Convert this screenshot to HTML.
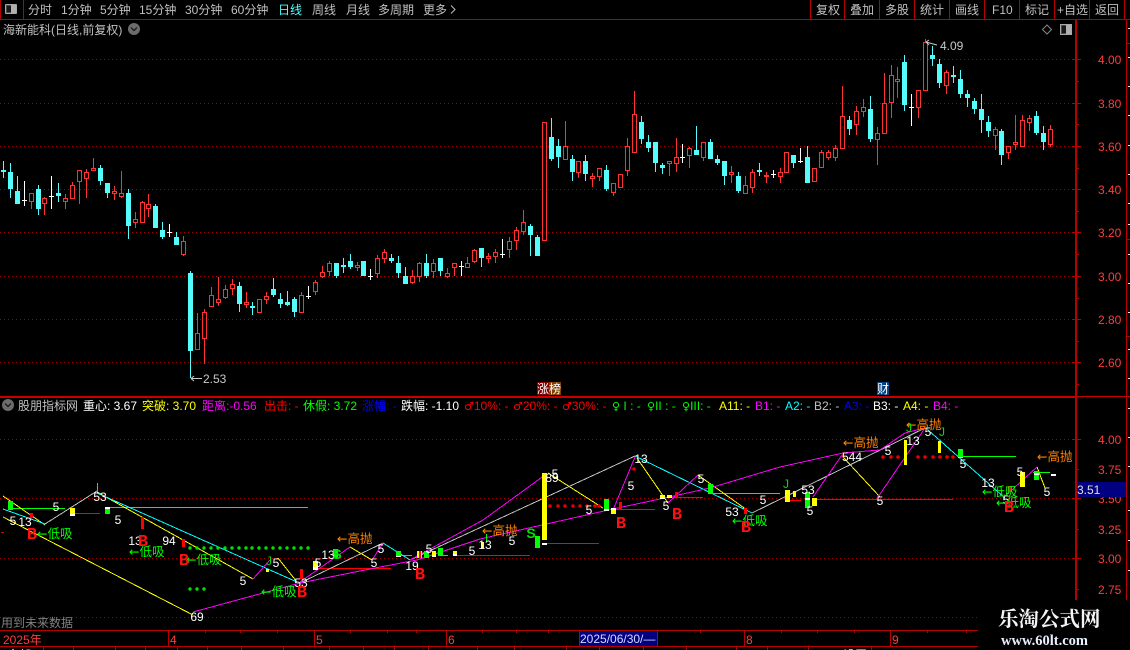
<!DOCTYPE html>
<html lang="zh"><head><meta charset="utf-8"><title>K线</title>
<style>
html,body{margin:0;padding:0;background:#000;width:1130px;height:650px;overflow:hidden}
svg{display:block;position:absolute;left:0;top:0}
text{font-family:"Liberation Sans","WenQuanYi Zen Hei","Noto Sans CJK SC",sans-serif;font-size:12px;white-space:pre}
tspan.s{font-family:"DejaVu Sans",sans-serif;font-size:11px}
tspan.r{font-family:"DejaVu Sans",sans-serif;font-size:12.5px}
.n{fill:#fff;text-anchor:middle}
.o{fill:#ff8000;font-size:12.5px}
.g{fill:#00ff00;font-size:12.5px}
.b{fill:#ff1010;font-family:"Liberation Mono",monospace;font-size:17px;font-weight:bold;text-anchor:middle}
.m{fill:#c8c8c8;text-anchor:middle}
.a{fill:#ff3c3c}
</style></head><body>
<svg width="1130" height="650" viewBox="0 0 1130 650" xmlns="http://www.w3.org/2000/svg">
<rect width="1130" height="650" fill="#000"/>

<!-- grid -->
<g shape-rendering="crispEdges" stroke="#a80000" stroke-width="1" stroke-dasharray="1 3" fill="none">
<path d="M0 59.5H1075M0 103.5H1075M0 146.5H1075M0 189.5H1075M0 232.5H1075M0 276.5H1075M0 319.5H1075M0 362.5H1075M0 439.5H1075M0 498.5H1075M0 558.5H1075M0 617.5H978"/>
</g>

<!-- frame -->
<g shape-rendering="crispEdges" stroke="#b80000" fill="none">
<path d="M0 19.5H1130M23.5 0V19M810.5 0V19M844.5 0V19M879.5 0V19M914.5 0V19M949.5 0V19M984.5 0V19M1019.5 0V19M1054.5 0V19M1089.5 0V19M1124.5 0V19"/>
<path d="M0.5 0V19"/>
<path d="M0 396.5H1130M0 397.5H1075" stroke="#c80000"/>
<path d="M1075.5 20V600M1076.5 20V600M1126.5 20V600"/>
<path d="M1126 239.5H1130M1126 336.5H1130M1126 43.5H1130"/>
<path d="M1073 59.5H1081M1073 103.5H1081M1073 146.5H1081M1073 189.5H1081M1073 232.5H1081M1073 276.5H1081M1073 319.5H1081M1073 362.5H1081M1076 81.5H1079M1076 124.5H1079M1076 168.5H1079M1076 211.5H1079M1076 254.5H1079M1076 298.5H1079M1076 341.5H1079M1076 384.5H1079"/>
<path d="M1073 439.5H1081M1073 498.5H1081M1073 558.5H1081M1076 469.5H1079M1076 529.5H1079M1076 589.5H1079"/>
<path d="M0 630.5H978M0 646.5H978M168.5 630V646M314.5 630V646M446.5 630V646M579.5 630V646M657.5 630V646M744.5 630V646M890.5 630V646"/>
<path d="M205.5 630V633M240.5 630V633M277.5 630V633M350.5 630V633M387.5 630V633M416.5 630V633M482.5 630V633M516.5 630V633M548.5 630V633M700.5 630V633M781.5 630V633M817.5 630V633M854.5 630V633M927.5 630V633M966.5 630V633"/>
<path d="M43.5 646V650M73.5 646V650M115.5 646V650M145.5 646V650M177.5 646V650M207.5 646V650M241.5 646V650M283.5 646V650M329.5 646V650M363.5 646V650M394.5 646V650M428.5 646V650M477.5 646V650M514.5 646V650M566.5 646V650M599.5 646V650M643.5 646V650M686.5 646V650M736.5 646V650M767.5 646V650M808.5 646V650M871.5 646V650"/>
</g>
<path shape-rendering="crispEdges" stroke="#e8e8e8" fill="none" d="M1128 28.5H1130M1128 57.5H1130M1128 86.5H1130M1128 115.5H1130M1128 145.5H1130M1128 174.5H1130M1128 203.5H1130M1128 224.5H1130M1128 254.5H1130M1128 283.5H1130M1128 312.5H1130M1128 349.5H1130M1128 378.5H1130M1128 408.5H1130M1128 437.5H1130M1128 466.5H1130M1128 510.5H1130M1128 540.5H1130M1128 570.5H1130"/>

<!-- toolbar icon -->
<g shape-rendering="crispEdges">
<rect x="5.5" y="4.5" width="11" height="9" rx="1" stroke="#a8a8a8" fill="#4a4a4a"/>
<rect x="11" y="5" width="5" height="8" fill="#b0b0b0"/>
<rect x="7" y="6" width="4" height="6" fill="#181818"/>
</g>
<!-- toolbar text -->
<g fill="#c0c0c0">
<text x="28" y="14">分时</text>
<text x="61" y="14">1分钟</text>
<text x="100" y="14">5分钟</text>
<text x="139" y="14">15分钟</text>
<text x="185" y="14">30分钟</text>
<text x="231" y="14">60分钟</text>
<text x="278" y="14" fill="#54fcfc">日线</text>
<text x="312" y="14">周线</text>
<text x="346" y="14">月线</text>
<text x="378" y="14">多周期</text>
<text x="423" y="14">更多</text>
<path d="M451 5.5l4 4-4 4" fill="none" stroke="#c0c0c0"/>
<text x="816" y="14">复权</text>
<text x="850" y="14">叠加</text>
<text x="885" y="14">多股</text>
<text x="920" y="14">统计</text>
<text x="955" y="14">画线</text>
<text x="992" y="14">F10</text>
<text x="1025" y="14">标记</text>
<text x="1057" y="14">+自选</text>
<text x="1095" y="14">返回</text>
<text x="3" y="34">海新能科(日线,前复权)</text>
</g>
<circle cx="134" cy="29" r="6" fill="#6c6c6c"/>
<path d="M131 27.5l3 3 3-3" fill="none" stroke="#111" stroke-width="1.2"/>
<path d="M1047 25l4.500 4.500-4.500 4.500-4.500-4.500z" fill="none" stroke="#888"/>
<g shape-rendering="crispEdges"><rect x="1060.500" y="24.500" width="11" height="10" fill="#4a4a4a" stroke="#a8a8a8"/><rect x="1066" y="25" width="5" height="9" fill="#b0b0b0"/><rect x="1062" y="26" width="4" height="7" fill="#181818"/></g>

<!-- axis labels -->
<g class="a">
<text class="a" x="1098" y="64">4.00</text>
<text class="a" x="1098" y="108">3.80</text>
<text class="a" x="1098" y="151">3.60</text>
<text class="a" x="1098" y="194">3.40</text>
<text class="a" x="1098" y="237">3.20</text>
<text class="a" x="1098" y="281">3.00</text>
<text class="a" x="1098" y="324">2.80</text>
<text class="a" x="1098" y="367">2.60</text>
<text class="a" x="1098" y="444">4.00</text>
<text class="a" x="1098" y="474">3.75</text>
<text class="a" x="1098" y="503">3.50</text>
<text class="a" x="1098" y="534">3.25</text>
<text class="a" x="1098" y="563">3.00</text>
<text class="a" x="1098" y="594">2.75</text>
</g>

<!-- candles -->
<g shape-rendering="crispEdges" fill="none">
<path stroke="#ff3232" d="M31.5 193V209M44.5 197V215M65.5 194V209M72.5 182V199M79.5 170V204M86.5 169V198M93.5 158V171M114.5 186V200M121.5 171V198M135.5 212V228M142.5 201V223M148.5 194V217M183.5 236V256M197.5 313V350M204.5 309V364M211.5 287V307M218.5 277V306M225.5 285V299M232.5 279V295M246.5 292V308M259.5 299V313M266.5 292V304M301.5 292V313M315.5 280V295M322.5 266V278M329.5 261V276M357.5 262V271M377.5 255V278M384.5 249V263M412.5 270V284M419.5 262V282M433.5 259V278M447.5 268V278M454.5 263V276M467.5 257V268M474.5 249V263M488.5 253V263M495.5 249V263M509.5 237V258M516.5 227V250M523.5 210V235M544.5 122V241M565.5 121V160M578.5 161V178M592.5 173V187M599.5 168V181M613.5 183V196M620.5 174V188M627.5 138V176M634.5 91V153M669.5 161V176M676.5 138V172M689.5 147V168M703.5 142V161M731.5 166V183M745.5 176V194M752.5 169V193M766.5 172V183M780.5 168V183M786.5 152V173M814.5 168V182M821.5 150V168M828.5 150V160M835.5 145V161M842.5 86V149M856.5 106V135M863.5 99V117M877.5 127V165M884.5 73V134M891.5 65V118M897.5 67V98M918.5 90V118M925.5 39V91M946.5 70V94M995.5 127V150M1008.500 146V159M1015.500 115V150M1022.500 115V147M1029.500 115V131M1050.500 125V147"/>
<path stroke="#ff3232" fill="#000" d="M29.500 193.500h4v8h-4zM42.500 198.500h4v5h-4zM63.500 198.500h4v3h-4zM70.500 185.500h4v13h-4zM77.500 170.500h4v11h-4zM84.500 172.500h4v6h-4zM91.500 168.500h4v2h-4zM112.500 191.500h4v2h-4zM119.500 193.500h4v3h-4zM133.500 219.500h4v3h-4zM140.500 202.500h4v20h-4zM146.500 204.500h4v4h-4zM181.500 241.500h4v13h-4zM195.500 333.500h4v16h-4zM202.500 312.500h4v26h-4zM209.500 295.500h4v11h-4zM216.500 299.500h4v3h-4zM223.500 289.500h4v8h-4zM230.500 284.500h4v4h-4zM244.500 302.500h4v2h-4zM257.500 299.500h4v13h-4zM264.500 296.500h4v3h-4zM299.500 295.500h4v17h-4zM313.500 282.500h4v9h-4zM320.500 272.500h4v4h-4zM327.500 263.500h4v8h-4zM355.500 265.500h4v2h-4zM375.500 258.500h4v15h-4zM382.500 252.500h4v6h-4zM410.500 276.500h4v6h-4zM417.500 263.500h4v13h-4zM431.500 263.500h4v8h-4zM445.500 273.500h4v3h-4zM452.500 263.500h4v4h-4zM465.500 263.500h4v4h-4zM472.500 250.500h4v11h-4zM486.500 256.500h4v2h-4zM493.500 252.500h4v4h-4zM507.500 241.500h4v8h-4zM514.500 230.500h4v10h-4zM521.500 222.500h4v9h-4zM542.500 122.500h4v118h-4zM563.500 146.500h4v13h-4zM576.500 161.500h4v11h-4zM590.500 176.500h4v2h-4zM597.500 168.500h4v8h-4zM611.500 183.500h4v9h-4zM618.500 174.500h4v13h-4zM625.500 146.500h4v24h-4zM632.500 114.500h4v38h-4zM667.500 161.500h4v2h-4zM674.500 157.500h4v6h-4zM687.500 148.500h4v7h-4zM701.500 142.500h4v15h-4zM729.500 172.500h4v2h-4zM743.500 185.500h4v8h-4zM750.500 172.500h4v15h-4zM764.500 175.500h4v1h-4zM778.500 172.500h4v4h-4zM784.500 152.500h4v20h-4zM812.500 168.500h4v13h-4zM819.500 152.500h4v15h-4zM826.500 152.500h4v5h-4zM833.500 148.500h4v9h-4zM840.500 116.500h4v32h-4zM854.500 111.500h4v13h-4zM861.500 107.500h4v4h-4zM875.500 133.500h4v6h-4zM882.500 103.500h4v30h-4zM889.500 75.500h4v27h-4zM895.500 79.500h4v2h-4zM916.500 90.500h4v17h-4zM923.500 42.500h4v48h-4zM944.500 72.500h4v13h-4zM993.500 129.500h4v6h-4zM1006.500 146.500h4v6h-4zM1013.500 142.500h4v2h-4zM1020.500 120.500h4v26h-4zM1027.500 118.500h4v4h-4zM1048.500 129.500h4v15h-4z"/>
<path stroke="#54fcfc" d="M3.500 161V178M10.500 163V198M17.500 176V204M38.500 185V215M58.500 183V202M100.500 165V185M107.500 183V198M128.500 189V239M155.500 204V228M162.500 222V239M176.500 232V245M190.500 271V378M239.500 282V312M252.500 302V315M273.500 278V297M280.500 293V308M287.500 291V306M294.500 297V317M336.500 263V278M343.500 258V273M350.500 254V269M363.500 261V276M391.500 254V263M398.500 256V278M405.500 267V284M426.500 254V278M440.500 258V276M481.500 248V267M530.500 224V256M537.500 235V256M551.500 118V161M558.500 139V168M572.500 155V181M585.500 155V181M606.500 165V191M641.500 116V144M648.500 135V152M655.500 142V172M662.500 163V174M696.500 126V155M710.500 139V159M717.500 155V165M724.500 161V185M738.500 172V193M759.500 163V176M793.500 155V168M807.500 146V183M849.500 116V135M870.500 96V142M904.500 55V111M932.500 46V66M939.500 59V88M953.500 66V83M960.500 70V98M967.500 90V107M974.500 98V114M981.500 94V133M988.500 116V137M1001.500 129V165M1036.500 111V135M1043.500 126V150"/>
<path stroke="#54fcfc" stroke-width="5" d="M3.500 170V172M10.500 172V189M17.500 191V204M38.500 189V209M58.500 193V196M100.500 168V181M107.500 183V193M128.500 193V226M155.500 206V228M162.500 230V237M176.500 237V245M190.500 273V351M239.500 286V304M252.500 306V308M273.500 289V295M280.500 299V304M287.500 302V305M294.500 299V312M336.500 263V276M343.500 265V267M350.500 261V267M363.500 261V276M391.500 258V261M398.500 263V273M405.500 276V284M426.500 263V276M440.500 258V271M481.500 248V258M530.500 226V235M537.500 237V256M551.500 137V159M558.500 146V157M572.500 159V172M585.500 161V174M606.500 170V189M641.500 122V139M648.500 142V148M655.500 142V163M662.500 165V168M696.500 150V155M710.500 142V159M717.500 159V163M724.500 161V176M738.500 176V191M759.500 170V172M793.500 155V163M807.500 157V183M849.500 120V129M870.500 109V139M904.500 62V105M932.500 55V59M939.500 64V83M953.500 75V77M960.500 79V94M967.500 94V98M974.500 101V109M981.500 109V120M988.500 122V131M1001.500 131V155M1036.500 116V133M1043.500 133V142"/>
<path stroke="#fff" d="M24.500 181V206M22 200.500H27M51.500 176V209M49 196.500H54M169.500 224V237M167 232.500H172M308.500 286V299M306 296.500H311M370.500 269V280M368 276.500H373M461.500 261V276M459 266.500H464M502.500 239V258M500 254.500H505M682.500 144V163M680 157.500H685M773.500 170V178M771 174.500H776M800.500 148V163M798 161.500H803M911.500 94V126M909 107.500H914"/>
</g>
<!-- price notes -->
<path d="M926 42l11 3M926 42l3-2M926 42l3 3" stroke="#c8c8c8" fill="none"/>
<text x="940" y="50" fill="#c8c8c8">4.09</text>
<path d="M191 378.500H202M191 378.500l3-2.500M191 378.500l3 2.500" stroke="#c8c8c8" fill="none"/>
<text x="203" y="383" fill="#c8c8c8">2.53</text>
<g shape-rendering="crispEdges"><rect x="537" y="382" width="12" height="13" fill="#800000"/><rect x="549" y="382" width="12" height="13" fill="#804000"/><rect x="877" y="382" width="12" height="13" fill="#004080"/></g>
<text x="537" y="393" fill="#fff">涨榜</text>
<text x="877" y="393" fill="#fff">财</text>

<!-- indicator legend -->
<circle cx="8" cy="405" r="6" fill="#6c6c6c"/>
<path d="M5 403.500l3 3 3-3" fill="none" stroke="#111" stroke-width="1.2"/>
<g>
<text x="18" y="410" fill="#c0c0c0">股朋指标网</text>
<text x="83" y="410" fill="#fff">重心: 3.67</text>
<text x="142" y="410" fill="#ffff00">突破: 3.70</text>
<text x="202" y="410" fill="#ff00ff">距离:-0.56</text>
<text x="264" y="410" fill="#ff0000">出击: -</text>
<text x="303" y="410" fill="#00ff00">休假: 3.72</text>
<text x="362" y="410" fill="#0000ff">涨幅: -</text>
<text x="401" y="410" fill="#fff">跌幅: -1.10</text>
<text x="464" y="410" fill="#ff0000"><tspan class="s">♂</tspan>10%: -</text>
<text x="513" y="410" fill="#ff0000"><tspan class="s">♂</tspan>20%: -</text>
<text x="562" y="410" fill="#ff0000"><tspan class="s">♂</tspan>30%: -</text>
<text x="612" y="410" fill="#00ff00"><tspan class="s">♀</tspan> I : -</text>
<text x="647" y="410" fill="#00ff00"><tspan class="s">♀</tspan>II : -</text>
<text x="682" y="410" fill="#00ff00"><tspan class="s">♀</tspan>III: -</text>
<text x="719" y="410" fill="#ffff00">A11: -</text>
<text x="755" y="410" fill="#ff00ff">B1: -</text>
<text x="785" y="410" fill="#00ffff">A2: -</text>
<text x="814" y="410" fill="#c0c0c0">B2: -</text>
<text x="844" y="410" fill="#0000ff">A3: -</text>
<text x="873" y="410" fill="#fff">B3: -</text>
<text x="903" y="410" fill="#ffff00">A4: -</text>
<text x="933" y="410" fill="#ff00ff">B4: -</text>
</g>

<!-- horizontal levels -->
<g shape-rendering="crispEdges" fill="none">
<path stroke="#00ff00" d="M8 508.500H65M110 507.500H308M713 493.500H780M958 456.500H1016M1033 472.500H1050M400 555.500H412M442 555.500H448"/>
<path stroke="#ff0000" d="M75 513.500H100M317 568.500H391M453 555.500H530M543 543.500H599M613 509.500H655M665 497.500H703M790 500.500H801M813 499.500H953"/>
</g>

<!-- zigzag lines -->
<g fill="none" stroke-width="1" shape-rendering="crispEdges">
<path stroke="#ffff00" d="M3 496L45 525M3 517L193 615M97 492L253 579M278 558L297 582M350 547L372 560M548 473L603 508M637 458L668 503M698 475L747 510M843 457L880 497M1037 467L1045 488"/>
<path stroke="#00ffff" d="M3 509L45 524M97 493L297 582M383 543L410 560M635 456L752 513M928 430L1005 498"/>
<path stroke="#c0c0c0" d="M45 524L97 491M300 583L383 543M410 560L635 456M752 513L925 428"/>
<path stroke="#ff00ff" d="M193 612L300 583L375 568L417 560L480 539L613 509L660 499L710 488L780 467L843 453L880 450L905 433L925 428M253 579L270 560M300 582L350 547M372 560L383 543M410 560L483 520L545 475M613 510L635 457M668 503L698 475M813 497L842 455M878 497L925 428M1003 498L1037 467"/>
</g>

<!-- bars -->
<g shape-rendering="crispEdges">
<path fill="#00ff00" d="M8 501h5v9h-5zM105 509h5v5h-5zM396 551h5v5h-5zM424 551h5v7h-5zM438 548h5v8h-5zM535 536h5v12h-5zM604 499h5v10h-5zM708 484h5v10h-5zM805 492h5v16h-5zM958 449h5v8h-5zM1034 475h5v5h-5zM1034 471h5v2h-5zM333 549h5v9h-5z"/>
<path fill="#ffff00" d="M70 508h5v6h-5zM313 561h5v6h-5zM417 551h5v7h-5zM432 551h4v4h-4zM453 551h4v3h-4zM481 542h3v6h-3zM542 473h5v67h-5zM611 510h5v4h-5zM660 495h5v3h-5zM667 495h5v2h-5zM785 490h5v12h-5zM793 491h3v6h-3zM812 498h5v8h-5zM904 440h3v25h-3zM938 441h3v12h-3zM1020 472h5v15h-5zM266 569h3v3h-3z"/>
<path fill="#ff0000" d="M30 513h3v5h-3zM141 517h3v12h-3zM182 539h3v8h-3zM300 569h3v10h-3zM419 551h2v7h-2zM619 502h3v8h-3zM675 492h3v5h-3zM744 508h3v6h-3zM1008 486h3v6h-3z"/>
<path fill="#fff" d="M70 514h5v2h-5zM105 507h5v2h-5zM313 567h5v3h-5zM396 556h5v1h-5zM432 555h4v2h-4zM453 554h4v2h-4zM542 543h5v2h-5zM604 509h5v2h-5zM611 508h5v2h-5zM660 498h5v1h-5zM667 497h5v1h-5zM805 498h5v2h-5zM958 457h5v1h-5zM1034 473h5v2h-5zM1051 474h5v2h-5z"/>
</g>
<path stroke="#00ff00" fill="none" shape-rendering="crispEdges" d="M97.500 483V492M486.500 534V542"/>

<!-- dots -->
<g fill="#00e000">
<circle cx="190" cy="548" r="1.700"/><circle cx="197" cy="548" r="1.700"/><circle cx="204" cy="548" r="1.700"/><circle cx="211" cy="548" r="1.700"/><circle cx="218" cy="548" r="1.700"/><circle cx="225" cy="548" r="1.700"/><circle cx="232" cy="548" r="1.700"/><circle cx="239" cy="548" r="1.700"/><circle cx="246" cy="548" r="1.700"/><circle cx="252" cy="548" r="1.700"/><circle cx="259" cy="548" r="1.700"/><circle cx="266" cy="548" r="1.700"/><circle cx="273" cy="548" r="1.700"/><circle cx="280" cy="548" r="1.700"/><circle cx="287" cy="548" r="1.700"/><circle cx="294" cy="548" r="1.700"/><circle cx="301" cy="548" r="1.700"/><circle cx="308" cy="548" r="1.700"/>
<circle cx="190" cy="589" r="1.700"/><circle cx="197" cy="589" r="1.700"/><circle cx="204" cy="589" r="1.700"/>
</g>
<g fill="#e80000">
<circle cx="550" cy="506" r="1.800"/><circle cx="558" cy="506" r="1.800"/><circle cx="565" cy="506" r="1.800"/><circle cx="573" cy="506" r="1.800"/><circle cx="580" cy="506" r="1.800"/><circle cx="587" cy="506" r="1.800"/><circle cx="595" cy="506" r="1.800"/><circle cx="599" cy="506" r="1.800"/>
<circle cx="634" cy="469" r="1.800"/>
<circle cx="883" cy="457" r="1.800"/><circle cx="891" cy="457" r="1.800"/><circle cx="898" cy="457" r="1.800"/>
<circle cx="918" cy="457" r="1.800"/><circle cx="925" cy="457" r="1.800"/><circle cx="933" cy="457" r="1.800"/><circle cx="940" cy="457" r="1.800"/><circle cx="947" cy="457" r="1.800"/><circle cx="953" cy="457" r="1.800"/>
<circle cx="843" cy="456" r="1.800"/>
</g>

<!-- number marks -->
<g>
<text class="n" x="56" y="511">5</text><text class="n" x="100" y="501">53</text><text class="n" x="118" y="524">5</text>
<text class="n" x="13" y="525">5</text><text class="n" x="25" y="526">13</text>
<text class="n" x="135" y="545">13</text><text class="n" x="169" y="545">94</text><text class="n" x="243" y="585">5</text>
<text class="n" x="276" y="567">5</text><text class="n" x="301" y="587">53</text><text class="n" x="197" y="621">69</text>
<text class="n" x="318" y="567">5</text><text class="n" x="328" y="559">13</text><text class="n" x="381" y="553">5</text><text class="n" x="374" y="567">5</text>
<text class="n" x="412" y="570">19</text><text class="n" x="429" y="553">5</text><text class="n" x="472" y="555">5</text><text class="n" x="485" y="549">13</text>
<text class="n" x="512" y="545">5</text><text class="n" x="552" y="482">89</text><text class="n" x="555" y="478">5</text><text class="n" x="589" y="514">5</text>
<text class="n" x="641" y="463">13</text><text class="n" x="631" y="490">5</text><text class="n" x="666" y="510">5</text><text class="n" x="701" y="483">5</text>
<text class="n" x="732" y="516">53</text><text class="n" x="763" y="504">5</text><text class="n" x="810" y="515">5</text><text class="n" x="808" y="494">53</text>
<text class="n" x="852" y="461">544</text><text class="n" x="888" y="455">5</text><text class="n" x="913" y="445">13</text><text class="n" x="928" y="436">5</text>
<text class="n" x="880" y="505">5</text><text class="n" x="963" y="468">5</text><text class="n" x="988" y="487">13</text><text class="n" x="1006" y="504">5</text><text class="n" x="1020" y="476">5</text><text class="n" x="1047" y="496">5</text>
</g>

<!-- signal labels -->
<g>
<text class="o" x="337" y="543"><tspan class="r">←</tspan>高抛</text>
<text class="o" x="482" y="535"><tspan class="r">←</tspan>高抛</text>
<text class="o" x="843" y="447"><tspan class="r">←</tspan>高抛</text>
<text class="o" x="906" y="429"><tspan class="r">←</tspan>高抛</text>
<text class="o" x="1037" y="461"><tspan class="r">←</tspan>高抛</text>
<text class="g" x="37" y="538"><tspan class="r">←</tspan>低吸</text>
<text class="g" x="129" y="556"><tspan class="r">←</tspan>低吸</text>
<text class="g" x="186" y="564"><tspan class="r">←</tspan>低吸</text>
<text class="g" x="261" y="596"><tspan class="r">←</tspan>低吸</text>
<text class="g" x="732" y="525"><tspan class="r">←</tspan>低吸</text>
<text class="g" x="982" y="496"><tspan class="r">←</tspan>低吸</text>
<text class="g" x="996" y="507"><tspan class="r">←</tspan>低吸</text>
<text class="b" x="32" y="539">B</text><text class="b" x="143" y="546">B</text><text class="b" x="184" y="565">B</text><text class="b" x="302" y="597">B</text><text class="b" x="420" y="579">B</text><text class="b" x="621" y="528">B</text><text class="b" x="677" y="519">B</text><text class="b" x="746" y="532">B</text><text class="b" x="1009" y="512">B</text>
<text x="337" y="559" fill="#00e000" style="font-size:14px;font-weight:bold;text-anchor:middle">S</text>
<text x="531" y="538" fill="#00e000" style="font-size:14px;font-weight:bold;text-anchor:middle">S</text>
<text x="942" y="436" fill="#00e000" style="text-anchor:middle">J</text>
<text x="269" y="565" fill="#00e000" style="text-anchor:middle">J</text>
<text x="786" y="488" fill="#00e000" style="text-anchor:middle">J</text>
<text x="909" y="432" fill="#00e000" style="text-anchor:middle">J</text>
<text x="1" y="627" fill="#808080">用到未来数据</text>
<path d="M1 532.500H4" stroke="#e00000" shape-rendering="crispEdges"/>
</g>

<!-- price tag -->
<rect x="1077" y="482" width="49" height="15" fill="#000080" shape-rendering="crispEdges"/>
<text x="1077" y="494" fill="#e0e0e0">3.51</text>

<!-- time axis -->
<text class="a" x="3" y="644">2025年</text>
<text class="a" x="170" y="644">4</text>
<text class="a" x="316" y="644">5</text>
<text class="a" x="448" y="644">6</text>
<rect x="580" y="631" width="77" height="15" fill="#000080" shape-rendering="crispEdges"/>
<text x="580" y="643" fill="#d8d8ff">2025/06/30/—</text>
<text class="a" x="746" y="644">8</text>
<text class="a" x="892" y="644">9</text>
<text x="7" y="659" fill="#d0d0d0">全部</text>
<text x="48" y="659" fill="#d0d0d0">+</text>
<text x="826" y="659" fill="#d0d0d0">+</text>
<text x="843" y="659" fill="#54fcfc">设置</text>

<!-- watermark -->
<rect x="978" y="600" width="152" height="50" fill="#000"/>
<text x="998" y="626" fill="#f4f4f4" style="font-family:'Noto Serif CJK SC','Liberation Serif',serif;font-size:20.500px;font-weight:bold">乐淘公式网</text>
<text x="1001" y="645" fill="#e8f0ff" style="font-family:'Liberation Serif',serif;font-size:14.500px;font-weight:bold">www.60lt.com</text>
</svg>
</body></html>
